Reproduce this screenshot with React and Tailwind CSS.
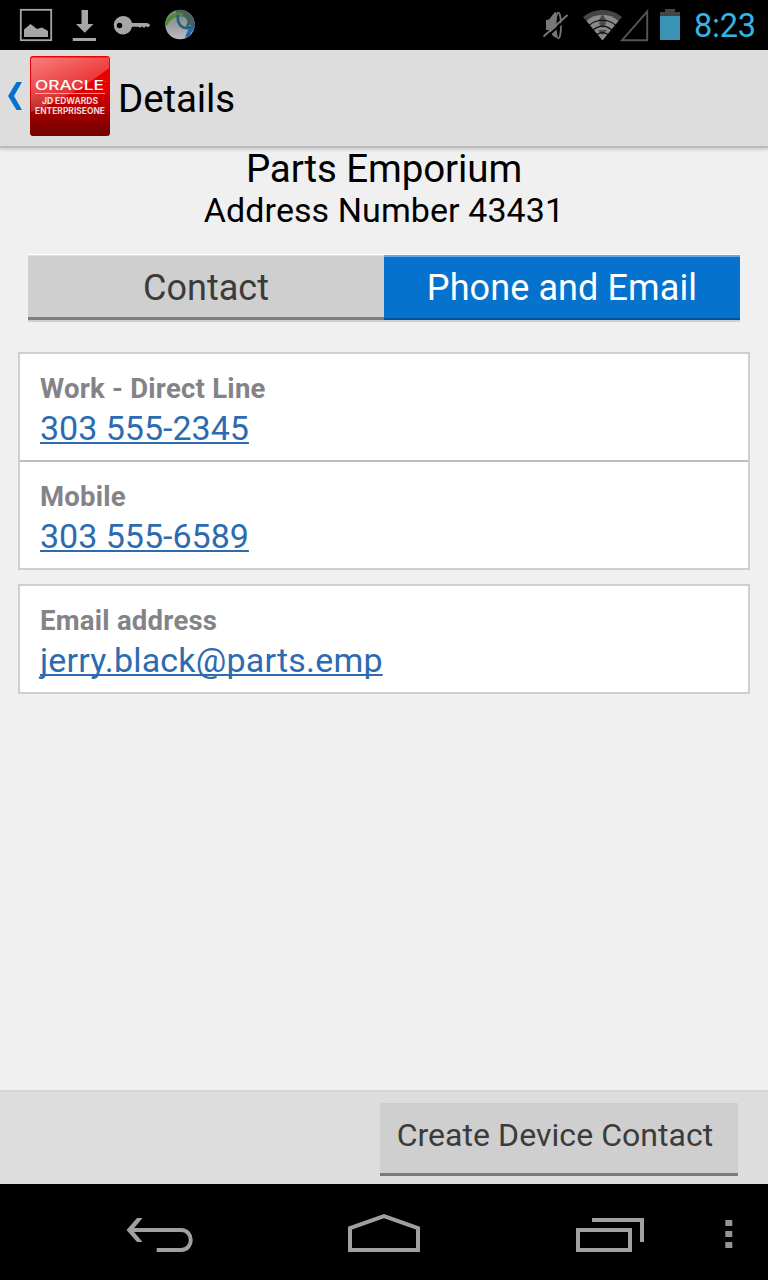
import React, { useState } from "react";

const tabs = ["Contact", "Phone and Email"];

const phones = [
  { label: "Work - Direct Line", value: "303 555-2345", href: "tel:3035552345" },
  { label: "Mobile", value: "303 555-6589", href: "tel:3035556589" },
];

const emails = [
  { label: "Email address", value: "jerry.black@parts.emp", href: "mailto:jerry.black@parts.emp" },
];

// notification icons on the left, radios + clock on the right
const StatusBar = () => (
  <div className="flex h-[50px] shrink-0 items-center justify-between bg-black">
    <svg width="220" height="50" viewBox="0 0 220 50">
      <rect x="20.8" y="9.8" width="30.4" height="30.4" fill="none" stroke="#a6a6a6" strokeWidth="1.8" />
      <path d="M24 37V29.500L30.500 24L37 29L42 27.500L48 31V37Z" fill="#a6a6a6" />
      <path d="M81.500 10H88V24H93.500L84.700 32.700L76 24H81.500Z" fill="#a6a6a6" />
      <rect x="72.700" y="38" width="23.300" height="3" fill="#a6a6a6" />
      <path
        d="M123 16C128 16 131 19 132 23H146Q150 23 150 25.500L148.500 27H147L146 25.800L145 27.500H143L142 26L141 27.500H139.500L138.500 26.800H132C131 31 128 34.500 123 34.500A9.200 9.200 0 0 1 123 16ZM119.500 22.800A2.700 2.700 0 1 0 119.500 28.200A2.700 2.700 0 0 0 119.500 22.800Z"
        fill="#a6a6a6"
        fillRule="evenodd"
      />
      <defs>
        <clipPath id="globe"><circle cx="180" cy="24.500" r="14.800" /></clipPath>
        <linearGradient id="globeBg" x1="0" y1="0" x2="0" y2="1">
          <stop offset="0" stopColor="#777b7c" />
          <stop offset="0.5" stopColor="#999d9f" />
          <stop offset="1" stopColor="#bcbfc1" />
        </linearGradient>
      </defs>
      <g clipPath="url(#globe)" fill="none">
        <rect x="165" y="9" width="30" height="31" fill="url(#globeBg)" />
        <path d="M176 10C186 8 195 15 195 26L189 25C190 19 184 14 176 15Z" fill="#4f5c60" />
        <path d="M165 25C169 17 176 13 183 15" stroke="#4d8c35" strokeWidth="4" />
        <path d="M183 15C189 17 190 22 187 27" stroke="#2f6a62" strokeWidth="2.600" />
        <path d="M178 15C177 22 180 28 187 28C191 28 194 26 195 24" stroke="#22607f" strokeWidth="2.800" />
        <path d="M194 27C190 29 188 33 187 39" stroke="#2a66aa" strokeWidth="4" />
      </g>
    </svg>
    <div className="flex items-center">
      <svg width="160" height="50" viewBox="534 0 160 50">
        <path d="M546 20L549 19.500L554.500 12.500L556 12V38L553 36L549 30H546Z" fill="#777" />
        <ellipse cx="558.300" cy="25.500" rx="2.700" ry="12.800" fill="none" stroke="#777" strokeWidth="1.700" />
        <path d="M545 38.500L569 17" stroke="#000" strokeWidth="2" />
        <path d="M543.500 36.500L567.500 15" stroke="#777" strokeWidth="2" />
        <path d="M583 17C594 7.500 611 7.500 622 17L617.500 22C608.500 14.500 596.500 14.500 587.500 22Z" fill="#454545" />
        <path d="M586.500 21C596 12.500 609 12.500 618.500 21L602.500 40.500Z" fill="#8a8a8a" />
        <path d="M602.500 14L607 21.500L604 23H606.500L602.500 28L598.500 23H601L598 21.500ZM598 30H607L602.500 35Z" fill="#4a4a4a" />
        <path d="M589 25.500C597 18.500 608 18.500 616 25.500M593 30C599 25 606 25 612 30M597 34.500C600.500 32 604.500 32 608 34.500" fill="none" stroke="#0c0c0c" strokeWidth="1.200" />
        <path d="M622 40.200H647.200V11.500Z" fill="none" stroke="#555" strokeWidth="1.900" />
        <path d="M665 9H675V12H680V16H660V12H665Z" fill="#454545" />
        <rect x="660" y="16" width="20" height="24" fill="#3a92b5" />
      </svg>
      <span className="w-[74px] pt-[2px] text-[32.500px] leading-[48px] tracking-[-0.2px] text-[#33b5e5]">8:23</span>
    </div>
  </div>
);

const AppIcon = () => (
  <svg width="80" height="80" viewBox="0 0 80 80">
    <defs>
      <linearGradient id="red" x1="0" y1="0" x2="0" y2="1">
        <stop offset="0" stopColor="#ee0000" />
        <stop offset="0.4" stopColor="#e60000" />
        <stop offset="0.87" stopColor="#860000" />
        <stop offset="1" stopColor="#740000" />
      </linearGradient>
      <linearGradient id="gloss" x1="0" y1="0" x2="0.6" y2="1">
        <stop offset="0" stopColor="#fff" stopOpacity="0.5" />
        <stop offset="1" stopColor="#fff" stopOpacity="0.06" />
      </linearGradient>
    </defs>
    <rect width="80" height="80" rx="3" fill="url(#red)" />
    <path d="M1 3Q1 1.500 3 1.500H79V12C61 26 34 44 1 56Z" fill="url(#gloss)" />
    <path d="M5 37.500H75" stroke="#fff" strokeOpacity="0.6" strokeWidth="1" />
    <g fill="#fff" fontFamily="Inter, sans-serif">
      <text x="5" y="33.500" fontSize="12.500" fontWeight="500" textLength="69" lengthAdjust="spacingAndGlyphs">ORACLE</text>
      <text x="75" y="28" fontSize="4">'</text>
      <g fillOpacity="0.85" fontWeight="700" fontSize="9">
        <text x="12" y="48.300" textLength="56" lengthAdjust="spacingAndGlyphs">JD EDWARDS</text>
        <text x="5" y="57.800" textLength="70" lengthAdjust="spacingAndGlyphs">ENTERPRISEONE</text>
      </g>
    </g>
  </svg>
);

const ActionBar = ({ title }) => (
  <header className="z-10 flex h-24 shrink-0 items-center bg-[#dddddd] pl-2 shadow-[0_2px_1px_#bcbcbc,0_4px_3px_#d0d0d0]">
    <svg className="mb-1" width="14" height="28" viewBox="0 0 14 28">
      <path d="M8.500 0H14L6 14L14 28H8.500L0 14Z" fill="#0572ce" />
    </svg>
    <div className="mb-1 ml-2 h-20 w-20">
      <AppIcon />
    </div>
    <h1 className="mt-0.5 ml-2 text-[38.500px] leading-[48px] tracking-[-0.1px] text-black">{title}</h1>
  </header>
);

const Card = ({ items }) => (
  <section className="divide-y-2 divide-[#bbbbbb] border-2 border-[#cfcfcf] bg-white">
    {items.map((item) => (
      <div key={item.label} className="box-content h-[89px] pt-[17px] pl-5">
        <p className="text-[27.500px] leading-[36px] font-bold tracking-[0.25px] text-[#838388]">{item.label}</p>
        <a
          href={item.href}
          className={`-mt-px block w-fit text-[34px] leading-[44px] text-[#2d6bb0] underline decoration-2 underline-offset-[2px] [text-decoration-skip-ink:none] ${
            item.href.startsWith("mailto") ? "tracking-[0.19px]" : ""
          }`}
        >
          {item.value}
        </a>
      </div>
    ))}
  </section>
);

const NavBar = () => (
  <nav className="h-24 shrink-0 bg-black">
    <svg width="768" height="96" viewBox="0 0 768 96" fill="none" stroke="#a0a0a0" strokeWidth="4">
      <path d="M130 46H181C194 46 194 66 181 66H156.700" />
      <path d="M137 34H142.500L132.500 46L142.500 58H137L126.500 46Z" fill="#a0a0a0" stroke="none" />
      <path d="M350 44.200L384 32.200L418 44.200V66H350Z" />
      <path d="M578 46H630V66H578ZM592 36H642V58" />
      <path d="M725.300 36H732.300V42H725.300ZM725.300 47H732.300V53H725.300ZM725.300 58H732.300V64H725.300Z" fill="#959595" stroke="none" />
    </svg>
  </nav>
);

const App = () => {
  const [active, setActive] = useState("Phone and Email");

  return (
    <div className="flex h-screen w-full flex-col bg-[#f0f0f0] font-['Roboto',sans-serif]">
      <StatusBar />
      <ActionBar title="Details" />

      <main className="z-20 flex-1">
        <div className="pt-px text-center text-black">
          <h2 className="text-[38.500px] leading-[44px] tracking-[-0.1px]">Parts Emporium</h2>
          <p className="text-[34px] leading-[39px] tracking-[0.08px]">Address Number 43431</p>
        </div>

        <div className="mx-7 mt-6 grid h-[68px] grid-cols-2 border-t border-b-2 border-t-white border-b-[#cfcfcf]">
          {tabs.map((tab) => (
            <button
              key={tab}
              onClick={() => setActive(tab)}
              className={
                tab === active
                  ? "border-t-2 border-b-2 border-t-[#63a5de] border-b-[#05549b] bg-[#0572ce] pt-[1px] text-[36px] leading-[56px] tracking-[0.1px] text-white"
                  : "border-t border-b-3 border-t-[#e0e0e0] border-b-[#7d7d7d] bg-[#cfcfcf] pt-[3px] text-[36px] leading-[56px] text-[#3b3b3b]"
              }
            >
              {tab}
            </button>
          ))}
        </div>

        <div className="mt-[30px] mr-[18px] ml-[18px] flex flex-col gap-[14px]">
          <Card items={phones} />
          <Card items={emails} />
        </div>
      </main>

      <footer className="flex h-[94px] shrink-0 justify-end border-t-2 border-[#d5d5d5] bg-[#dddddd] pt-[11px] pr-[30px]">
        <button className="h-[73px] w-[358px] border-b-3 border-[#7a7a7a] bg-[#cfcfcf] pr-2 pb-[6px] text-[32px] leading-[64px] tracking-[0.05px] text-[#3b3b3b]">
          Create Device Contact
        </button>
      </footer>
      <NavBar />
    </div>
  );
};

export default App;
